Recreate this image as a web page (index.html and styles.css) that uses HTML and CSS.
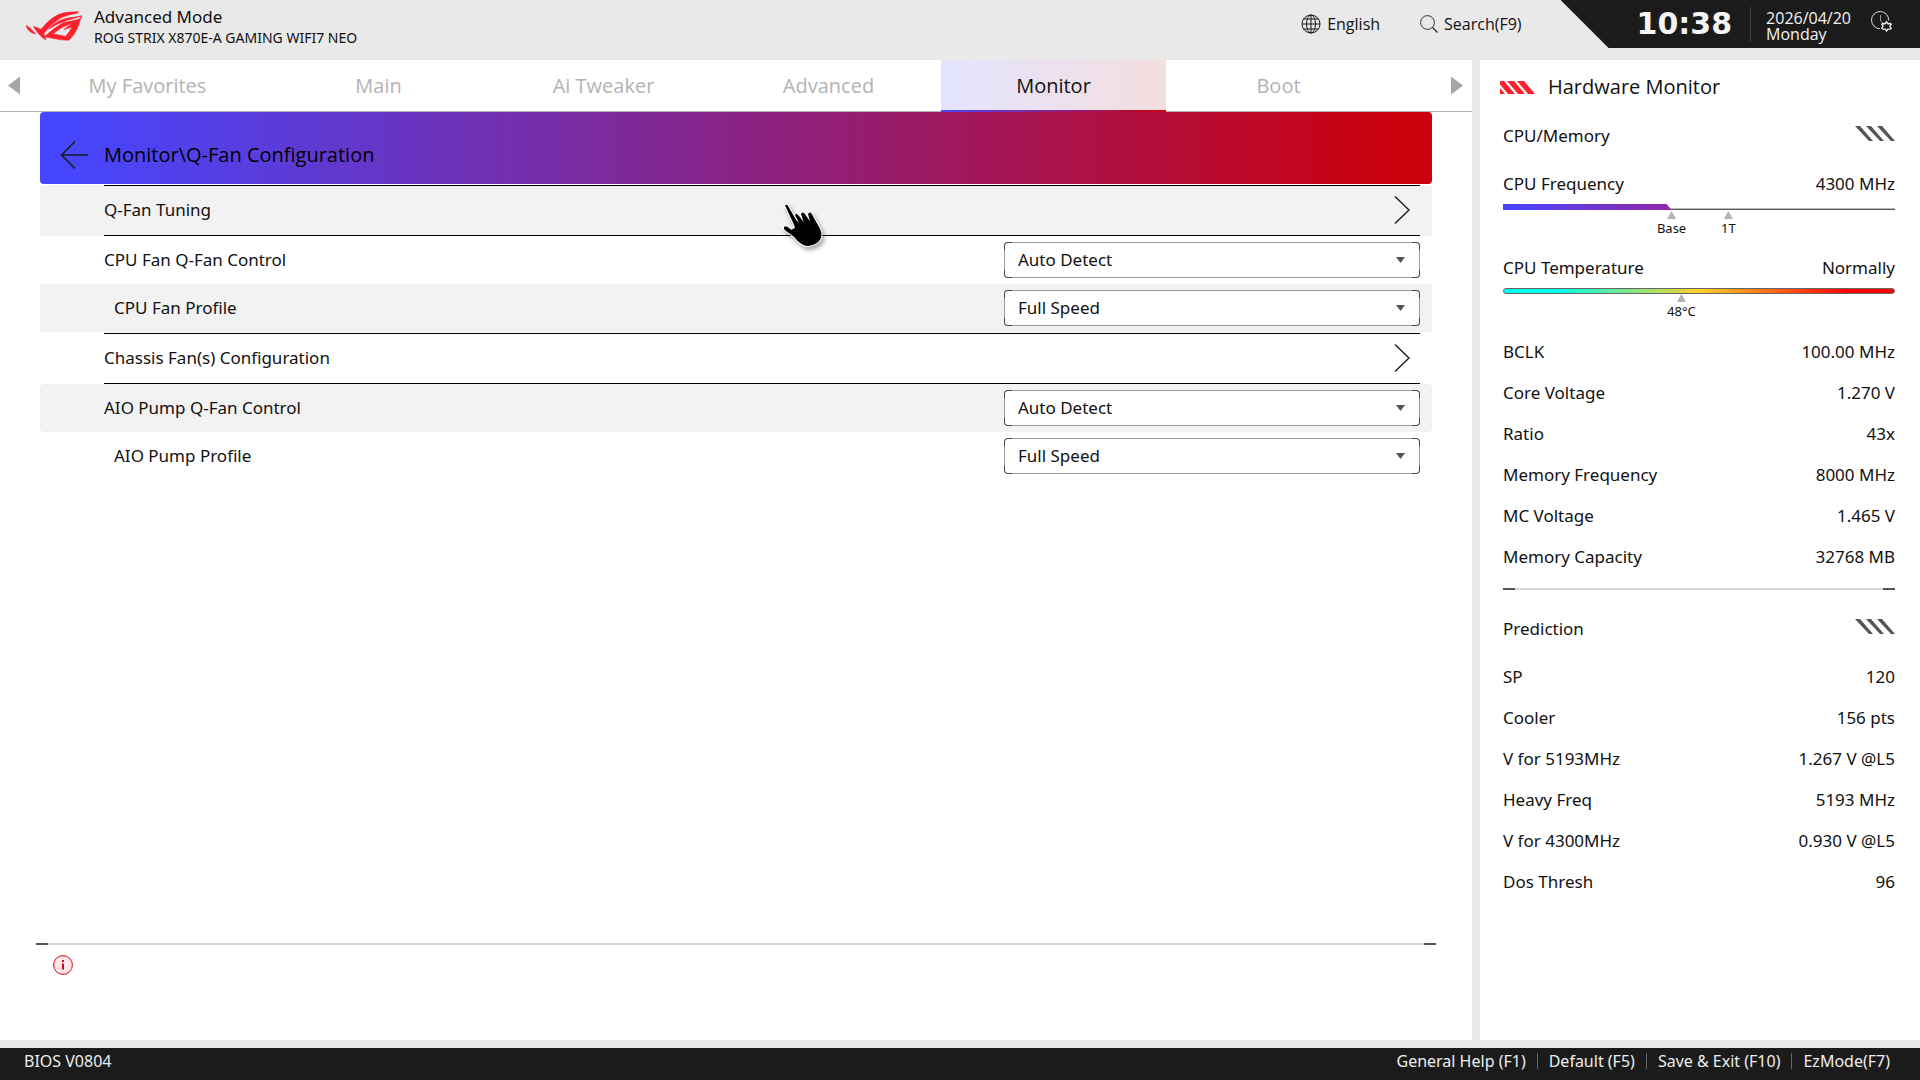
FILE: index.html
```html
<!DOCTYPE html>
<html lang="en">
<head>
<meta charset="utf-8">
<title>Advanced Mode - Q-Fan Configuration</title>
<link rel="stylesheet" href="styles.css">
</head>
<body>
<div class="app">
  <header class="topbar">
    <svg class="logo" viewBox="78 34 166 88" fill="#ff1f2d" stroke="#ff1f2d" stroke-width="2" stroke-linejoin="round" aria-hidden="true">
      <path d="M78 76Q90 83 95 90L107 101Q85 99 78 76Z"/>
      <path d="M100 79L123 88Q145 58 175 44Q190 36 234 36L230 40Q195 45 176 57Q150 74 131 100L137 119Q117 109 100 79Z"/>
      <path fill-rule="evenodd" d="M145 87Q165 65 195 56L243 48L240 56L233 78Q222 106 204 120L183 119L133 110Q152 90 187 69L236 58L243 48L200 61Q170 70 145 87ZM158 101L195 109Q207 97 215 80L190 89L215 70Q185 78 158 101Z"/>
    </svg>
    <div class="product">
      <h1 class="mode">Advanced Mode</h1>
      <p class="board">ROG STRIX X870E-A GAMING WIFI7 NEO</p>
    </div>
    <div class="tools">
      <button class="tool" type="button">
        <svg width="20" height="20" viewBox="0 0 20 20" fill="none" stroke="#1b1b1b" aria-hidden="true"><circle cx="10" cy="10" r="9"/><ellipse cx="10" cy="10" rx="4.5" ry="9"/><path d="M10 1v18M1 10h18M2.5 5h15M2.5 15h15"/></svg>
        English
      </button>
      <button class="tool" type="button">
        <svg width="18" height="18" viewBox="0 0 18 18" fill="none" stroke="#333" aria-hidden="true"><circle cx="7.5" cy="7.5" r="6.9"/><path d="M12.5 12.5L17.5 17.5" stroke-width="1.4"/></svg>
        Search(F9)
      </button>
    </div>
    <div class="clock">
      <time class="time">10:38</time>
      <div class="date"><span>2026/04/20</span><span>Monday</span></div>
      <button class="clock-settings" type="button" aria-label="Set date and time">
        <svg width="22" height="22" viewBox="0 0 22 22" fill="none" stroke="#ddd" aria-hidden="true"><path d="M9 17.7A8.6 8.6 0 1 1 17.7 9.5"/><path d="M9.5 4v6l2 1.5" stroke="#999"/><path d="M15.5 10.7l1.3 2 2.4-.2 1 .7-1.3 2.100 1.3 2.1-1 .8-2.400-.1-1.3 2-1.3-2-2.4.1-1-.8 1.3-2.1-1.3-2.1 1-.7 2.4.2z" fill="#1b1b1b" stroke="#eee" stroke-width="1.3"/></svg>
      </button>
    </div>
  </header>

  <div class="workspace">
    <main class="panel">
      <nav class="tabs">
        <button class="scroll scroll-left" type="button" aria-label="Previous tab"></button>
        <a class="tab tab-first" href="#favorites">My Favorites</a>
        <a class="tab" href="#main">Main</a>
        <a class="tab" href="#tweaker">Ai Tweaker</a>
        <a class="tab" href="#advanced">Advanced</a>
        <a class="tab tab-active" href="#monitor" aria-current="page">Monitor</a>
        <a class="tab" href="#boot">Boot</a>
        <button class="scroll scroll-right" type="button" aria-label="Next tab"></button>
      </nav>

      <section class="settings">
        <div class="banner">
          <button class="back" type="button" aria-label="Back">
            <svg width="30" height="30" viewBox="0 0 30 30" fill="none" stroke="#1b1b1b" stroke-width="1.6" aria-hidden="true"><path d="M16 1.5L2.5 15L16 28.5M2.5 15H29"/></svg>
          </button>
          <h2 class="path">Monitor\Q-Fan Configuration</h2>
        </div>

        <div class="row row-link">
          <a class="submenu" href="#tuning">Q-Fan Tuning
            <svg width="16" height="28" viewBox="0 0 16 28" fill="none" stroke="#1b1b1b" stroke-width="1.4" aria-hidden="true"><path d="M1 .5L15 14L1 27.5"/></svg></a>
          <svg class="cursor" width="48" height="50" viewBox="0 0 144 150" aria-hidden="true">
            <path d="M9 10Q14 6 18 12L43 55L51 62L39 40Q42 32 48 38L65 60L57 36Q60 28 67 34L84 58L78 36Q83 27 89 35Q100 55 106 66Q125 95 115 112Q108 124 92 129Q72 136 60 127Q44 116 36 104L8 84Q3 77 9 73L16 74L28 83L37 79Q40 76 36 68Z" fill="#000" stroke="#fff" stroke-width="6" stroke-linejoin="round" paint-order="stroke"/>
          </svg>
        </div>
        <div class="row">
          <label for="cpu-control">CPU Fan Q-Fan Control</label>
          <div class="picker"><select id="cpu-control"><option>Auto Detect</option></select></div>
        </div>
        <div class="row row-child">
          <label for="cpu-profile">CPU Fan Profile</label>
          <div class="picker"><select id="cpu-profile"><option>Full Speed</option></select></div>
        </div>
        <div class="row row-link">
          <a class="submenu" href="#chassis">Chassis Fan(s) Configuration
            <svg width="16" height="28" viewBox="0 0 16 28" fill="none" stroke="#1b1b1b" stroke-width="1.4" aria-hidden="true"><path d="M1 .5L15 14L1 27.5"/></svg></a>
        </div>
        <div class="row">
          <label for="aio-control">AIO Pump Q-Fan Control</label>
          <div class="picker"><select id="aio-control"><option>Auto Detect</option></select></div>
        </div>
        <div class="row row-child">
          <label for="aio-profile">AIO Pump Profile</label>
          <div class="picker"><select id="aio-profile"><option>Full Speed</option></select></div>
        </div>
      </section>

      <section class="help">
        <hr class="rule">
        <svg class="info" width="20" height="20" viewBox="0 0 20 20" aria-hidden="true"><circle cx="10" cy="10" r="9.4" fill="#fde6e8" stroke="#cc0a1c"/><path d="M10 5v2M10 8.5v6" stroke="#cc0a1c" stroke-width="2"/></svg>
      </section>
    </main>

    <aside class="hardware">
      <h2 class="hw-title">
        <svg width="36" height="13" viewBox="0 0 36 13" fill="#ff1f2d" aria-hidden="true"><path d="M17 0h7l11 13h-7zM7 0h7l11 13h-7zM-3 0h7l11 13h-7zM-13 0h7l11 13h-7z"/></svg>
        Hardware Monitor
      </h2>
      <section class="group">
        <div class="group-head"><h3>CPU/Memory</h3>
          <svg width="40" height="15" viewBox="0 0 40 15" fill="#555" aria-hidden="true"><path d="M0 0H5L18 15H14ZM11 0H16L29 15H25ZM22 0H27L40 15H36Z"/></svg></div>
        <dl class="stats">
          <div class="stat stat-gauge">
            <dt>CPU Frequency</dt><dd>4300 MHz</dd>
            <dd class="gauge gauge-frequency"><span class="fill" style="width:43%"></span>
              <span class="marker" style="left:43%">Base</span>
              <span class="marker" style="left:57.5%">1T</span></dd>
          </div>
          <div class="stat stat-gauge">
            <dt>CPU Temperature</dt><dd>Normally</dd>
            <dd class="gauge gauge-heat"><span class="marker" style="left:45.5%">48°C</span></dd>
          </div>
          <div class="stat"><dt>BCLK</dt><dd>100.00 MHz</dd></div>
          <div class="stat"><dt>Core Voltage</dt><dd>1.270 V</dd></div>
          <div class="stat"><dt>Ratio</dt><dd>43x</dd></div>
          <div class="stat"><dt>Memory Frequency</dt><dd>8000 MHz</dd></div>
          <div class="stat"><dt>MC Voltage</dt><dd>1.465 V</dd></div>
          <div class="stat"><dt>Memory Capacity</dt><dd>32768 MB</dd></div>
        </dl>
      </section>
      <hr class="rule">
      <section class="group">
        <div class="group-head"><h3>Prediction</h3>
          <svg width="40" height="15" viewBox="0 0 40 15" fill="#555" aria-hidden="true"><path d="M0 0H5L18 15H14ZM11 0H16L29 15H25ZM22 0H27L40 15H36Z"/></svg></div>
        <dl class="stats">
          <div class="stat"><dt>SP</dt><dd>120</dd></div>
          <div class="stat"><dt>Cooler</dt><dd>156 pts</dd></div>
          <div class="stat"><dt>V for 5193MHz</dt><dd>1.267 V @L5</dd></div>
          <div class="stat"><dt>Heavy Freq</dt><dd>5193 MHz</dd></div>
          <div class="stat"><dt>V for 4300MHz</dt><dd>0.930 V @L5</dd></div>
          <div class="stat"><dt>Dos Thresh</dt><dd>96</dd></div>
        </dl>
      </section>
    </aside>
  </div>

  <footer class="statusbar">
    <span>BIOS V0804</span>
    <div class="keys">
      <button class="key" type="button">General Help (F1)</button>
      <button class="key" type="button">Default (F5)</button>
      <button class="key" type="button">Save &amp; Exit (F10)</button>
      <button class="key" type="button">EzMode(F7)</button>
    </div>
  </footer>
</div>
</body>
</html>
```
FILE: styles.css
```css
* { box-sizing: border-box; }

body {
  margin: 0;
  background: #e9e9e9;
  color: #111;
  font: 17px/24px "Noto Sans", "Open Sans", sans-serif;
}

h1, h2, h3, p, dl, dd { margin: 0; font-weight: 400; }
a { color: inherit; text-decoration: none; }

button {
  border: 0;
  padding: 0;
  background: none;
  color: inherit;
  font: inherit;
  cursor: pointer;
}

svg { display: block; flex: none; }

.app {
  display: flex;
  flex-direction: column;
  min-height: 100vh;
}

/* Top bar */
.topbar {
  display: flex;
  align-items: flex-start;
  height: 60px;
  padding-left: 26px;
}

.logo { width: 56px; height: 30px; margin-top: 11px; }
.product { padding: 5px 0 0 12px; }
.mode { font-size: 17px; line-height: 24px; }
.board { font-size: 14px; line-height: 18px; }

.tools {
  display: flex;
  gap: 40px;
  margin-left: auto;
  padding-top: 12px;
  font-family: "Open Sans", sans-serif;
}

.tool {
  display: flex;
  align-items: center;
  gap: 6px;
  font-size: 16px;
}

.clock {
  display: flex;
  align-items: center;
  height: 48px;
  margin-left: 39px;
  padding: 0 27px 0 76px;
  background: #1b1b1b;
  color: #f4f4f4;
  clip-path: polygon(0 0, 100% 0, 100% 100%, 48px 100%);
}

.time {
  font: bold 30px/48px "DejaVu Sans", sans-serif;
}

.date {
  display: flex;
  flex-direction: column;
  margin-left: 18px;
  padding: 3px 0 0 15px;
  border-left: 1px solid #444;
  font: 16px/16px "Open Sans", sans-serif;
}

.clock-settings { margin: 0 0 4px 20px; }

/* Main area */
.workspace {
  display: flex;
  flex: 1;
  gap: 8px;
  margin-bottom: 8px;
}

.panel {
  display: flex;
  flex: 1;
  flex-direction: column;
  background: #fff;
}

.tabs {
  display: flex;
  height: 52px;
  border-bottom: 1px solid #b3b3b3;
}

.scroll { width: 41px; flex: none; }

.scroll::before {
  content: "";
  display: block;
  width: 12px;
  height: 18px;
  margin: 0 8px;
  background: #a6a6a6;
}

.scroll-left::before { clip-path: polygon(100% 0, 100% 100%, 0 50%); }
.scroll-right::before { margin-left: 20px; clip-path: polygon(0 0, 100% 50%, 0 100%); }
.scroll-right { margin-left: auto; }

.tab {
  flex: 0 1 225px;
  height: 52px;
  color: #b3b3b3;
  font: 20px/52px "Open Sans", sans-serif;
  text-align: center;
}

.tab-first { padding-right: 12px; }

.tab-active {
  background:
    linear-gradient(90deg, #4646ff, #cc000c) bottom / 100% 2px no-repeat,
    linear-gradient(90deg, #e4e4ff, #f4dede);
  color: #111;
}

.settings { padding: 0 40px; }

.banner {
  display: flex;
  height: 72px;
  padding: 14px 20px 0 19px;
  border-radius: 4px;
  background: linear-gradient(90deg, #4646ff 2%, #cc000c 98%);
}

.back { width: 45px; height: 58px; }
.path { font: 20px/58px "Open Sans", sans-serif; color: #000; }

.row {
  position: relative;
  display: flex;
  align-items: center;
  justify-content: space-between;
  height: 48px;
  padding: 0 12px 0 64px;
  border-radius: 4px;
}

.row:nth-child(even) { background: #f2f2f2; }
.row-child label { padding-left: 10px; }
.row-link { height: 51px; margin-top: 1px; }

.submenu {
  display: flex;
  flex: 1;
  align-items: center;
  justify-content: space-between;
  height: 51px;
  padding: 0 10px 2px 0;
  border: solid #000;
  border-width: 1px 0;
}

.picker { position: relative; width: 416px; }

.picker::after {
  content: "";
  position: absolute;
  top: 15px;
  right: 15px;
  width: 9px;
  height: 6px;
  background: #555;
  clip-path: polygon(0 0, 100% 0, 50% 100%);
  pointer-events: none;
}

.picker select {
  display: block;
  width: 100%;
  height: 36px;
  padding: 0 13px;
  border: 1px solid transparent;
  border-radius: 4px;
  appearance: none;
  background:
    linear-gradient(#fff, #fff) padding-box,
    linear-gradient(#444, #444) left top / 8px 8px no-repeat border-box,
    linear-gradient(#444, #444) right top / 8px 8px no-repeat border-box,
    linear-gradient(#444, #444) left bottom / 8px 8px no-repeat border-box,
    linear-gradient(#444, #444) right bottom / 8px 8px no-repeat border-box,
    linear-gradient(#999, #999) border-box;
  color: inherit;
  font: inherit;
}

.cursor {
  position: absolute;
  top: 17px;
  left: 742px;
  z-index: 1;
  filter: drop-shadow(2px 3px 2px rgb(0 0 0 / 35%));
}

.rule {
  height: 2px;
  margin: 0;
  border: 0;
  background: linear-gradient(90deg, #555 12px, #d4d4d4 12px calc(100% - 12px), #555 calc(100% - 12px));
}

.help {
  height: 97px;
  margin: auto 36px 0;
}

.info { margin: 10px 17px; }

/* Hardware monitor */
.hardware {
  flex: 0 0 440px;
  padding: 0 25px 0 23px;
  background: #fff;
}

.hw-title {
  display: flex;
  align-items: center;
  gap: 12px;
  height: 52px;
  margin-left: -3px;
  padding-top: 2px;
  font: 20px/24px "Open Sans", sans-serif;
}

.group-head {
  display: flex;
  align-items: center;
  justify-content: space-between;
  height: 48px;
}

.group-head h3 { font-size: 17px; }
.group-head svg { margin-bottom: 6px; }

.stat {
  display: flex;
  flex-wrap: wrap;
  align-content: flex-start;
  justify-content: space-between;
  height: 41px;
  padding-top: 12px;
  line-height: 24px;
}

.stat-gauge { height: 84px; }

.gauge {
  position: relative;
  flex: 0 0 100%;
  height: 6px;
  margin-top: 8px;
  font-size: 13px;
  line-height: 16px;
}

.gauge-frequency { border-bottom: 1px solid #555; }
.gauge-frequency::before {
  content: "";
  position: absolute;
  inset: auto 0 0;
  height: 1px;
  background: #bbb;
}

.fill {
  position: absolute;
  top: 0;
  height: 6px;
  background: linear-gradient(90deg, #4646ff, #9326a8);
  clip-path: polygon(0 0, calc(100% - 5px) 0, 100% 100%, 0 100%);
}

.marker {
  position: absolute;
  top: 7px;
  transform: translateX(-50%);
  text-align: center;
}

.marker::before {
  content: "";
  display: block;
  width: 9px;
  height: 8px;
  margin: 0 auto 1px;
  background: #b3b3b3;
  clip-path: polygon(50% 0, 100% 100%, 0 100%);
}

.gauge-heat {
  border: 1px solid #666;
  border-radius: 3px;
  background: linear-gradient(90deg, #00ffe8 14%, #ffd028 50%, #f00 88%);
}

.gauge-heat .marker { top: 5px; }

.hardware > .rule { margin: 14px 0 15px; }

/* Status bar */
.statusbar {
  display: flex;
  justify-content: space-between;
  height: 32px;
  padding: 0 30px 0 24px;
  background: #1b1b1b;
  color: #eee;
  font-size: 16px;
  line-height: 26px;
}

.keys { display: flex; align-items: flex-start; }

.key + .key::before {
  content: "";
  display: inline-block;
  width: 1px;
  height: 16px;
  margin: 0 11px;
  background: #666;
  vertical-align: -2px;
}
```
